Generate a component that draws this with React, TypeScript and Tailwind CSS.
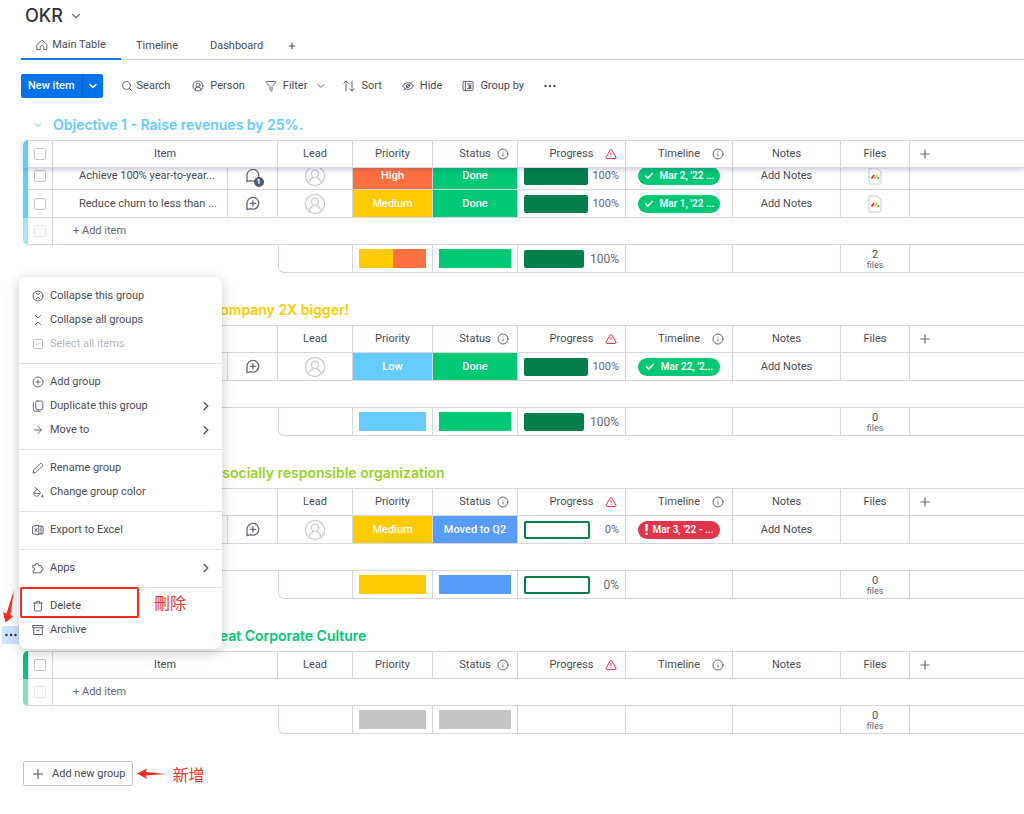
import type { ReactNode } from 'react';
import { clsx } from 'clsx';
import {
  ArrowRight,
  Check,
  ChevronDown,
  ChevronRight,
  CirclePlus,
  CircleUserRound,
  Funnel,
  Info,
  Plus,
  Search,
  SquareCheck,
  TriangleAlert,
} from 'lucide-react';

interface Cell {
  label: string;
  color: string;
}

interface Item {
  name: string;
  comments?: number;
  priority: Cell;
  status: Cell;
  progress: number;
  timeline: string;
  overdue?: boolean;
  file?: boolean;
  scrolled?: boolean;
}

interface Group {
  title: string;
  text: string;
  bar: string;
  barLight: string;
  items: Item[];
  priorities: string[];
  statuses: string[];
  progress?: number;
  files: number;
}

const groups: Group[] = [
  {
    title: 'Objective 1 - Raise revenues by 25%.',
    text: 'text-[#66ccff]',
    bar: 'bg-[#66ccff]',
    barLight: 'bg-[#a8e2ff]',
    items: [
      {
        name: 'Achieve 100% year-to-year...',
        comments: 1,
        priority: { label: 'High', color: 'bg-[#ff7040]' },
        status: { label: 'Done', color: 'bg-[#00c875]' },
        progress: 100,
        timeline: "Mar 2, '22 ...",
        file: true,
        scrolled: true,
      },
      {
        name: 'Reduce churn to less than ...',
        priority: { label: 'Medium', color: 'bg-[#ffcb00]' },
        status: { label: 'Done', color: 'bg-[#00c875]' },
        progress: 100,
        timeline: "Mar 1, '22 ...",
        file: true,
      },
    ],
    priorities: ['bg-[#ffcb00]', 'bg-[#ff7040]'],
    statuses: ['bg-[#00c875]'],
    progress: 100,
    files: 2,
  },
  {
    title: 'Objective 2 - Make this company 2X bigger!',
    text: 'text-[#ffcb00]',
    bar: 'bg-[#ffcb00]',
    barLight: 'bg-[#ffe580]',
    items: [
      {
        name: 'Open two offices',
        priority: { label: 'Low', color: 'bg-[#66ccff]' },
        status: { label: 'Done', color: 'bg-[#00c875]' },
        progress: 100,
        timeline: "Mar 22, '2...",
      },
    ],
    priorities: ['bg-[#66ccff]'],
    statuses: ['bg-[#00c875]'],
    progress: 100,
    files: 0,
  },
  {
    title: 'Objective 3 - Fostering a socially responsible organization',
    text: 'text-[#9cd326]',
    bar: 'bg-[#9cd326]',
    barLight: 'bg-[#cde992]',
    items: [
      {
        name: 'Volunteer days',
        priority: { label: 'Medium', color: 'bg-[#ffcb00]' },
        status: { label: 'Moved to Q2', color: 'bg-[#579bfc]' },
        progress: 0,
        timeline: "Mar 3, '22 - ...",
        overdue: true,
      },
    ],
    priorities: ['bg-[#ffcb00]'],
    statuses: ['bg-[#579bfc]'],
    progress: 0,
    files: 0,
  },
  {
    title: 'Objective 4 - Create a Great Corporate Culture',
    text: 'text-[#00c875]',
    bar: 'bg-[#00c875]',
    barLight: 'bg-[#80e3ba]',
    items: [],
    priorities: ['bg-[#c4c4c4]'],
    statuses: ['bg-[#c4c4c4]'],
    files: 0,
  },
];

function Icon({ children }: { children: ReactNode }) {
  return (
    <svg viewBox="0 0 12 12" className="size-3" fill="none" stroke="#676879" strokeLinecap="round" strokeLinejoin="round" aria-hidden="true">
      {children}
    </svg>
  );
}

function HouseIcon() {
  return (
    <Icon>
      <path d="M1.200 5.400 6 1.200l4.800 4.200v5.200H7.800V8.300a1.800 1.800 0 0 0-3.600 0v2.300h-3z" />
    </Icon>
  );
}

function SortIcon() {
  return (
    <Icon>
      <path d="M3 11V1M.8 3.200 3 1l2.200 2.200M9 1v10M6.800 8.800 9 11l2.200-2.200" />
    </Icon>
  );
}

function HideIcon() {
  return (
    <Icon>
      <path d="M.6 6c1.300-2.200 3.100-3.300 5.400-3.300S10.100 3.800 11.400 6c-1.300 2.200-3.100 3.300-5.400 3.300S1.900 8.200.6 6z" />
      <circle cx="6" cy="6" r="1.600" />
      <path d="M2 10.200 10 1.800" />
    </Icon>
  );
}

function GroupByIcon() {
  return (
    <Icon>
      <rect x="1" y="1.500" width="10" height="9" rx="1" />
      <path d="M3.300 1.500v9M5.300 4h4M5.300 8.500h4" />
      <rect x="6.500" y="5" width="2.800" height="3.500" fill="#676879" stroke="none" />
    </Icon>
  );
}

function CollapseGroupIcon() {
  return (
    <Icon>
      <circle cx="6" cy="6" r="5" />
      <path d="m4.500 3.500 1.500 1.300 1.500-1.300M4.500 8.500 6 7.200l1.500 1.300" />
    </Icon>
  );
}

function CollapseAllIcon() {
  return (
    <Icon>
      <path d="m3.500 1.500 2.500 2.500 2.500-2.500M3.500 10.500 6 8l2.500 2.500" />
    </Icon>
  );
}

function DuplicateIcon() {
  return (
    <Icon>
      <rect x="3.800" y="1" width="7" height="8.800" rx="1.300" />
      <path d="M1.300 2.500v6.800A1.900 1.900 0 0 0 3.200 11.200h5" />
    </Icon>
  );
}

function PencilIcon() {
  return (
    <Icon>
      <path d="M1.200 10.800 1.900 7.800 8.200 1.500a1.100 1.100 0 0 1 1.600 0l.7.7a1.100 1.100 0 0 1 0 1.600L4.200 10.100z" />
    </Icon>
  );
}

function BucketIcon() {
  return (
    <Icon>
      <path d="M3 1.200 8.200 6.200a.9.9 0 0 1 0 1.300L5.700 10a1.500 1.500 0 0 1-2.100 0L2 8.400a1.500 1.500 0 0 1 0-2.100l3.300-3" />
      <path d="M2 7.400h6" />
      <path d="M10.300 8.800c-.6.8-.9 1.200-.9 1.600a.9.9 0 0 0 1.800 0c0-.4-.3-.8-.9-1.600z" fill="#676879" strokeWidth=".4" />
    </Icon>
  );
}

function ExcelIcon() {
  return (
    <Icon>
      <path d="M1 2.200 6.800 1.200v9.600L1 9.800zM6.800 2.200H11v7.600H6.800M9 2.200v7.600" />
      <path d="m2.900 4.500 2 3M4.900 4.500l-2 3" />
    </Icon>
  );
}

function PuzzleIcon() {
  return (
    <Icon>
      <path d="M1.200 3.300h2.300a1.500 1.500 0 1 1 2.900 0h2.800v2.300a1.500 1.500 0 1 1 0 2.900v2.300H1.200V8.500a1.450 1.450 0 1 0 0-2.900z" />
    </Icon>
  );
}

function TrashIcon() {
  return (
    <Icon>
      <path d="M1.500 3h9M4.300 3V1.300h3.400V3M2.600 3v6.900a1.100 1.100 0 0 0 1.100 1.100h4.600a1.100 1.100 0 0 0 1.100-1.100V3" />
    </Icon>
  );
}

function ArchiveIcon() {
  return (
    <Icon>
      <path d="M1 1.500h10v2.300H1zM1.700 3.800v6.700h8.600V3.800M4.800 6.500h2.400" />
    </Icon>
  );
}

function DotsIcon() {
  return (
    <svg viewBox="0 0 12 12" className="size-3" fill="currentColor" aria-hidden="true">
      <circle cx="1.500" cy="6" r="1.200" />
      <circle cx="6" cy="6" r="1.200" />
      <circle cx="10.500" cy="6" r="1.200" />
    </svg>
  );
}

function BubbleIcon({ count }: { count?: number }) {
  return (
    <svg viewBox="0 0 18 18" className="size-[18px]" fill="none" stroke="#676879" strokeWidth="1.300" strokeLinecap="round" strokeLinejoin="round" aria-hidden="true">
      <path d="M3 14.700V8.300a5.900 5.900 0 1 1 5.900 5.900c-.9 0-1.800-.2-2.500-.6z" />
      {!count && <path d="M8.900 5.700v5.200M6.300 8.300h5.200" />}
    </svg>
  );
}

function FileIcon() {
  return (
    <svg viewBox="0 0 14 18" className="h-[18px] w-3.5" fill="none" aria-hidden="true">
      <path d="M2.500 1h6.300L13 5v10.500a1.500 1.500 0 0 1-1.500 1.500h-9A1.500 1.500 0 0 1 1 15.500v-13A1.500 1.500 0 0 1 2.500 1z" stroke="#c8cad6" />
      <path d="m4 11 1.700-2.600" stroke="#f62b54" strokeWidth="1.800" strokeLinecap="round" />
      <path d="m7 11 1.500-2.600" stroke="#ffcc00" strokeWidth="1.800" strokeLinecap="round" />
      <circle cx="10.200" cy="10.900" r="1" fill="#00c875" />
    </svg>
  );
}

function Avatar() {
  return (
    <svg viewBox="0 0 22 22" className="size-[22px]" fill="none" stroke="#c8cad6" strokeWidth="1.200" aria-hidden="true">
      <circle cx="11" cy="11" r="9.600" />
      <circle cx="11" cy="8.800" r="3.600" />
      <path d="M5.200 17.200c.6-2.600 2.200-4 4-4.600M16.800 17.200c-.6-2.600-2.200-4-4-4.600" />
    </svg>
  );
}

function Tick({ label, faded }: { label: string; faded?: boolean }) {
  return (
    <input
      type="checkbox"
      aria-label={label}
      className={clsx('block size-3 appearance-none rounded-xs border', faded ? 'border-[#e6e9ef]' : 'border-[#c8cad6]')}
    />
  );
}

function Th({ children, icon }: { children: ReactNode; icon?: ReactNode }) {
  return (
    <th scope="col" className="border-t border-r border-b border-[#d5d7de] font-normal">
      <div className="relative flex justify-center">
        {children}
        {icon && <span className="absolute inset-y-0 right-2 flex items-center">{icon}</span>}
      </div>
    </th>
  );
}

// the first row of a scrolled group slides under the header, so only its lower part stays visible
function Td({ children, scrolled, className }: { children?: ReactNode; scrolled?: boolean; className?: string }) {
  return (
    <td className={clsx('border-r border-b border-[#d5d7de] p-0', className)}>
      <div className={clsx('flex items-end overflow-hidden', scrolled ? 'h-[21px]' : 'h-[27px]')}>
        <div className="flex h-[27px] w-full shrink-0 items-center justify-center">{children}</div>
      </div>
    </td>
  );
}

function Progress({ value, summary }: { value: number; summary?: boolean }) {
  return (
    <div className="flex w-full items-center justify-between px-1.5 text-[#676879]">
      <div
        className={clsx(
          'h-[18px] rounded-xs border-2 border-[#037f4c]',
          value > 0 && 'bg-[#037f4c]',
          value > 0 && summary ? 'w-[60px]' : value > 0 ? 'w-16' : 'w-[66px]',
        )}
      />
      <span className={summary ? 'text-xs' : 'text-[11px] leading-[18px]'}>{value}%</span>
    </div>
  );
}

function ItemRow({ item, bar }: { item: Item; bar: string }) {
  const { scrolled } = item;
  return (
    <tr>
      <td className={clsx('p-0', bar)} />
      <Td scrolled={scrolled}>
        <Tick label={`Select ${item.name}`} />
      </Td>
      <Td scrolled={scrolled}>
        <span className="w-full truncate pl-[26px] text-left">{item.name}</span>
      </Td>
      <Td scrolled={scrolled}>
        <button type="button" aria-label="Updates" className="relative">
          <BubbleIcon count={item.comments} />
          {item.comments && (
            <span className="absolute -right-0.5 -bottom-0.5 flex size-[10px] items-center justify-center rounded-full bg-[#55576a] text-[8px] font-bold text-white">
              {item.comments}
            </span>
          )}
        </button>
      </Td>
      <Td scrolled={scrolled}>
        <Avatar />
      </Td>
      <Td scrolled={scrolled} className={clsx('font-medium text-white', item.priority.color)}>
        {item.priority.label}
      </Td>
      <Td scrolled={scrolled} className={clsx('font-medium text-white', item.status.color)}>
        {item.status.label}
      </Td>
      <Td scrolled={scrolled}>
        <Progress value={item.progress} />
      </Td>
      <Td scrolled={scrolled}>
        <span
          className={clsx(
            'flex h-[18px] w-[82px] items-center justify-center rounded-full text-[10px] font-semibold whitespace-nowrap text-white',
            item.overdue ? 'gap-1 bg-[#e2344a]' : 'gap-1.5 bg-[#00c875]',
          )}
        >
          {item.overdue ? <b className="text-sm leading-[18px]">!</b> : <Check className="size-2.5" strokeWidth={4} />}
          {item.timeline}
        </span>
      </Td>
      <Td scrolled={scrolled}>Add Notes</Td>
      <Td scrolled={scrolled}>{item.file && <FileIcon />}</Td>
      <td className="border-b border-[#d5d7de]" />
    </tr>
  );
}

function Battery({ colors, width }: { colors: string[]; width: string }) {
  return (
    <div className={clsx('flex h-[19px]', width)}>
      {colors.map((color) => (
        <span key={color} className={clsx('flex-1', color)} />
      ))}
    </div>
  );
}

function GroupTable({ group }: { group: Group }) {
  const scrolled = group.items.some((item) => item.scrolled);
  return (
    <section>
      <h2 className={clsx("flex h-[52px] items-center gap-2 pt-[22px] pl-[9px] font-['Inter',sans-serif] text-sm font-semibold", group.text)}>
        <ChevronDown className="size-3" />
        <button type="button" className="ml-px cursor-pointer whitespace-nowrap">{group.title}</button>
      </h2>
      <table className="w-full table-fixed border-separate border-spacing-0 text-center">
        <colgroup>
          <col className="w-[5px]" />
          <col className="w-[25px]" />
          <col className="w-[175px]" />
          <col className="w-[50px]" />
          <col className="w-[75px]" />
          <col className="w-20" />
          <col className="w-[85px]" />
          <col className="w-[108px]" />
          <col className="w-[107px]" />
          <col className="w-[108px]" />
          <col className="w-[69px]" />
          <col />
        </colgroup>
        <thead className={clsx(scrolled && 'relative shadow-[0_2px_5px_rgba(60,60,130,0.25)]')}>
          <tr className="h-7">
            <td className={clsx('rounded-tl-md', group.bar)} />
            <td className="border-t border-r border-b border-[#d5d7de] p-0">
              <div className="flex justify-center">
                <Tick label={`Select all in ${group.title}`} />
              </div>
            </td>
            <th scope="col" colSpan={2} className="border-t border-r border-b border-[#d5d7de] font-normal">
              Item
            </th>
            <Th>Lead</Th>
            <Th>Priority</Th>
            <Th icon={<Info className="size-3 text-[#676879]" />}>Status</Th>
            <Th icon={<TriangleAlert className="size-3 text-[#d83a52]" />}>Progress</Th>
            <Th icon={<Info className="size-3 text-[#676879]" />}>Timeline</Th>
            <Th>Notes</Th>
            <Th>Files</Th>
            <td className="border-t border-b border-[#d5d7de] p-0 pl-2 text-left">
              <button type="button" aria-label="Add column" className="block">
                <Plus className="size-3.5 text-[#676879]" />
              </button>
            </td>
          </tr>
        </thead>
        <tbody>
          {group.items.map((item) => (
            <ItemRow key={item.name} item={item} bar={group.bar} />
          ))}
          <tr className="h-[27px]">
            <td className={clsx('rounded-bl-md', group.barLight)} />
            <td className="border-r border-b border-[#d5d7de] p-0">
              <div className="flex justify-center">
                <Tick label="Select new item" faded />
              </div>
            </td>
            <td colSpan={10} className="border-b border-[#d5d7de] p-0 pl-5 text-left text-[#676879]">
              <button type="button">+ Add item</button>
            </td>
          </tr>
          <tr>
            <td colSpan={4} className="p-0" />
            <Td className="rounded-bl-md border-l" />
            <Td>
              <Battery colors={group.priorities} width="w-[67px]" />
            </Td>
            <Td>
              <Battery colors={group.statuses} width="w-[72px]" />
            </Td>
            <Td>{group.progress !== undefined && <Progress value={group.progress} summary />}</Td>
            <Td />
            <Td />
            <Td>
              <span className="flex flex-col pt-0.5 text-[11px] leading-[10px]">
                {group.files}
                <small className="text-[9px] leading-[10px] text-[#676879]">files</small>
              </span>
            </Td>
            <td className="border-b border-[#d5d7de]" />
          </tr>
        </tbody>
      </table>
    </section>
  );
}

function MenuItem({ icon, children, more, disabled }: { icon: ReactNode; children: ReactNode; more?: boolean; disabled?: boolean }) {
  return (
    <button
      type="button"
      role="menuitem"
      disabled={disabled}
      className={clsx('flex h-6 w-full items-center gap-1.5 px-[13px]', disabled && 'opacity-40')}
    >
      <span className="text-[#676879]">{icon}</span>
      {children}
      {more && <ChevronRight className="-mr-1 ml-auto size-3.5 text-[#55576a]" strokeWidth={2.5} />}
    </button>
  );
}

function MenuSection({ children }: { children: ReactNode }) {
  return <div className="border-b border-[#e1e3ea] pt-1.5 pb-[7px] last-of-type:border-b-0">{children}</div>;
}

function GroupMenu() {
  return (
    <div role="menu" className="absolute top-[277px] left-[19px] w-[203px] rounded-lg bg-white pt-px shadow-[0_3px_14px_rgba(0,0,0,0.22)]">
      <MenuSection>
        <MenuItem icon={<CollapseGroupIcon />}>Collapse this group</MenuItem>
        <MenuItem icon={<CollapseAllIcon />}>Collapse all groups</MenuItem>
        <MenuItem icon={<SquareCheck className="size-3" />} disabled>Select all items</MenuItem>
      </MenuSection>
      <MenuSection>
        <MenuItem icon={<CirclePlus className="size-3" />}>Add group</MenuItem>
        <MenuItem icon={<DuplicateIcon />} more>Duplicate this group</MenuItem>
        <MenuItem icon={<ArrowRight className="size-3" />} more>Move to</MenuItem>
      </MenuSection>
      <MenuSection>
        <MenuItem icon={<PencilIcon />}>Rename group</MenuItem>
        <MenuItem icon={<BucketIcon />}>Change group color</MenuItem>
      </MenuSection>
      <MenuSection>
        <MenuItem icon={<ExcelIcon />}>Export to Excel</MenuItem>
      </MenuSection>
      <MenuSection>
        <MenuItem icon={<PuzzleIcon />} more>Apps</MenuItem>
      </MenuSection>
      <MenuSection>
        <MenuItem icon={<TrashIcon />}>Delete</MenuItem>
        <MenuItem icon={<ArchiveIcon />}>Archive</MenuItem>
      </MenuSection>
      <span className="pointer-events-none absolute top-[310px] left-px h-[31px] w-[119px] rounded-xs border-2 border-[#f5291f]" />
      <span className="absolute top-[313px] left-[135px] font-['Noto_Sans_CJK_TC',sans-serif] text-base leading-6 text-[#e8382d]">刪除</span>
    </div>
  );
}

export default function App() {
  return (
    <div className="relative overflow-hidden bg-white pb-7 pl-[23px] font-['Roboto','Noto_Sans_CJK_TC',sans-serif] text-[11px] leading-[18px] text-[#4b4c55]">
      <header>
        <h1 className="flex h-8 items-center gap-1.5 pl-0.5 font-['Inter',sans-serif] text-lg font-medium text-[#323338]">
          OKR
          <ChevronDown className="size-3.5 text-[#676879]" />
        </h1>
        <nav className="-ml-0.5 flex h-7 border-b border-[#d5d7de]">
          <a href="#main" className="-mb-px flex w-[100px] items-center justify-center gap-1 border-b-2 border-[#1f76db]">
            <HouseIcon />
            Main Table
          </a>
          <a href="#timeline" className="flex items-center pl-[15px]">Timeline</a>
          <a href="#dashboard" className="flex items-center pl-8">Dashboard</a>
          <button type="button" aria-label="Add view" className="pl-6"><Plus className="size-2.5" strokeWidth={2.5} /></button>
        </nav>
        <div className="-ml-0.5 flex h-[51px] items-center">
          <div className="flex h-6 rounded-xs bg-[#0073ea] text-white">
            <button type="button" className="rounded-l-xs border-r border-[#0060b9] px-[7px] font-medium">New item</button>
            <button type="button" aria-label="More ways to add" className="w-5">
              <ChevronDown className="mx-auto size-3" strokeWidth={3} />
            </button>
          </div>
          <button type="button" className="ml-[18px] flex items-center gap-1"><Search className="size-3 text-[#676879]" />Search</button>
          <button type="button" className="ml-[22px] flex items-center gap-1.5"><CircleUserRound className="size-3 text-[#676879]" />Person</button>
          <button type="button" className="ml-5 flex items-center gap-1.5"><Funnel className="size-3 text-[#676879]" />Filter</button>
          <button type="button" aria-label="Filter options" className="ml-2"><ChevronDown className="size-3 text-[#676879]" /></button>
          <button type="button" className="ml-4 flex items-center gap-1.5"><SortIcon />Sort</button>
          <button type="button" className="ml-5 flex items-center gap-1.5"><HideIcon />Hide</button>
          <button type="button" className="ml-5 flex items-center gap-1.5"><GroupByIcon />Group by</button>
          <button type="button" aria-label="More actions" className="ml-5"><DotsIcon /></button>
        </div>
      </header>
      <main className="-mt-[23px]">
        {groups.map((group) => (
          <GroupTable key={group.title} group={group} />
        ))}
        <div className="mt-[27px] flex items-center">
          <button type="button" className="flex h-[25px] items-center gap-1.5 rounded-xs border border-[#c3c6d4] px-1.5">
            <Plus className="size-4" strokeWidth={1.500} />
            Add new group
          </button>
          <svg viewBox="0 0 30 14" className="ml-1 h-3.5 w-[30px] text-[#f5291f]" fill="currentColor" aria-hidden="true">
            <path d="M0 6.500 10 1.500 8.500 5l20.500 2-20.500 1.500L10 12z" />
          </svg>
          <span className="ml-1.5 font-['Noto_Sans_CJK_TC',sans-serif] text-base leading-6 text-[#e8382d]">新增</span>
        </div>
      </main>
      <button type="button" aria-label="Group menu" className="absolute top-[626px] left-0.5 flex h-[18px] w-[18px] items-center justify-center rounded-l-xs bg-[#cce5ff] text-[#323338]">
        <DotsIcon />
      </button>
      <GroupMenu />
      <svg viewBox="0 0 14 34" className="absolute top-[590px] left-0.5 h-[34px] w-3.5 text-[#f5291f]" fill="currentColor" aria-hidden="true">
        <path d="M12 0 8.500 25l2.500 1.500-7.500 6L1 22l3.500 1.500z" />
      </svg>
    </div>
  );
}
